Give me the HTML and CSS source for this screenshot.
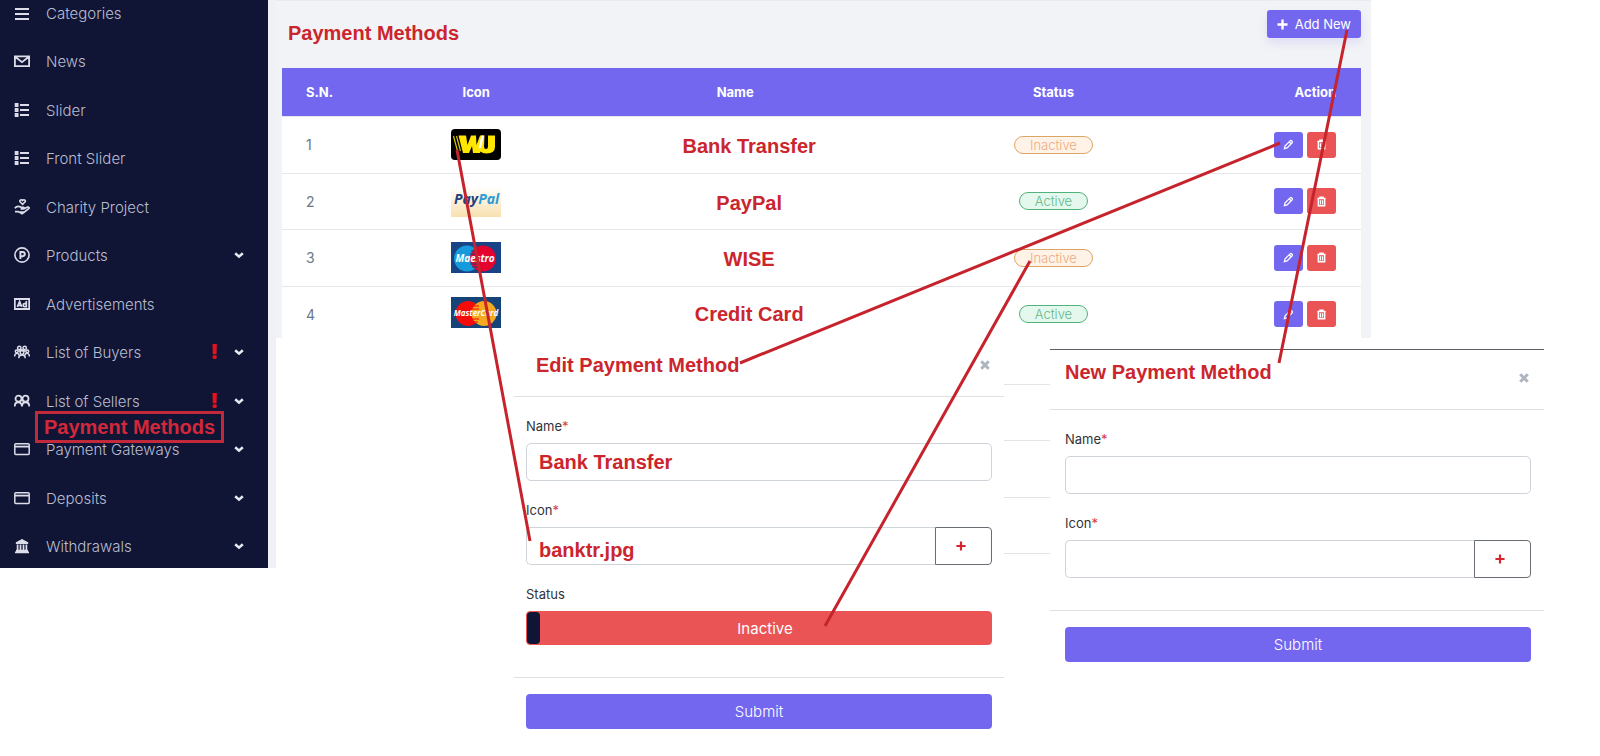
FILE: index.html
```html
<!DOCTYPE html>
<html lang="en">
<head>
<meta charset="utf-8">
<title>Payment Methods</title>
<link rel="stylesheet" href="styles.css">
</head>
<body>
<svg class="sprite" aria-hidden="true">
  <symbol id="i-menu" viewBox="0 0 16 16"><path d="M1 3h14M1 8h14M1 13h14" stroke-width="1.8"/></symbol>
  <symbol id="i-mail" viewBox="0 0 16 16"><path d="M.9 3.4h14.2v9.800H.9zM1.5 4L8 9.2 14.5 4" stroke-width="1.8"/></symbol>
  <symbol id="i-list" viewBox="0 0 16 16"><path d="M6 3h9M6 8h9M6 13h9" stroke-width="1.8"/><path d="M1.6 2h2v2.2h-2zM1.6 6.9h2v2.2h-2zM1.6 11.8h2V14h-2z" stroke-width="1.8"/></symbol>
  <symbol id="i-charity" viewBox="0 0 16 16"><path d="M8.6 5.4L5.9 2.6C5.3 1.2 7.4.1 8.6 1.6c1.200-1.500 3.300-.4 2.700 1z" stroke-width="1.500"/><path d="M.8 9.200C3 6.500 5 7 7 8.300h2.500c1 .4.700 1.700-.3 1.700H6.600M10 9.800l3.600-1.700c1.200-.4 2 .7 1.100 1.500L10.500 13H5.500L8 14.800l2.500-1.800M1 12.600h3l1.500.8" stroke-width="1.700"/></symbol>
  <symbol id="i-product" viewBox="0 0 16 16"><circle cx="8" cy="8" r="7.100" stroke-width="1.600"/><path d="M6.400 12V5h2.300a2 2 0 010 4.200H6.400" stroke-width="1.900"/></symbol>
  <symbol id="i-ad" viewBox="0 0 16 16"><path d="M.8 3h14.400v10H.8z" stroke-width="1.800"/><path d="M3.400 10.800L5.600 5.500l2.100 5.300M4.200 9.300h3M12.300 5v5.700H10.700a1.500 1.500 0 010-3h1.600" stroke-width="1.700"/></symbol>
  <symbol id="i-group" viewBox="0 0 16 16"><g stroke-width="1.500"><circle cx="5.300" cy="3.900" r="1.700"/><circle cx="10.700" cy="3.900" r="1.700"/><circle cx="2.700" cy="7.300" r="1.400"/><circle cx="13.300" cy="7.300" r="1.400"/><circle cx="8" cy="8.600" r="1.800"/><path d="M.6 12.500c0-4 4-4 4.400-1M15.400 12.500c0-4-4-4-4.400-1M4.800 14.200c0-4.400 6.400-4.400 6.400 0M4.500 7.500L8 5.700l3.500 1.800"/></g></symbol>
  <symbol id="i-users" viewBox="0 0 16 16"><g stroke-width="1.800"><circle cx="4.500" cy="5.700" r="3"/><circle cx="11.500" cy="5.700" r="3"/><path d="M.7 13.600c0-5.800 7.300-5.800 7.300 0 0-5.800 7.300-5.800 7.300 0"/></g></symbol>
  <symbol id="i-card" viewBox="0 0 16 16"><rect x=".8" y="2.800" width="14.400" height="10.600" rx="1" stroke-width="1.500"/><path d="M1 5.600h14" stroke-width="1.800"/></symbol>
  <symbol id="i-bank" viewBox="0 0 16 16"><path d="M2 5.200L8 2l6 3.200z" fill="currentColor"/><path d="M2 5.200L8 2l6 3.200zM3.600 6.500V12M6.500 6.500V12M9.500 6.500V12M12.400 6.500V12M2 12.600h12M1 14.400h14" stroke-width="1.700"/></symbol>
  <symbol id="i-down" viewBox="0 0 10 10"><path d="M1.200 3.200L5 6.600l3.800-3.400" stroke-width="2.600"/></symbol>
  <symbol id="i-pen" viewBox="0 0 12 12"><path d="M1.500 10.500l.8-3L7.800 2c1-1 3.200.9 2.200 2.100L4.500 9.700zM6.800 3.200l2 2" stroke-width="1.400"/></symbol>
  <symbol id="i-trash" viewBox="0 0 12 12"><path d="M1.500 2.700h9M4.300 2.500V1.200h3.400v1.300M2.500 3v7.700h7V3M4.800 4.500v4.800M7.200 4.500v4.800" stroke-width="1.500"/></symbol>
  <symbol id="i-plus" viewBox="0 0 12 12"><path d="M6 .5v11M.5 6h11" stroke-width="2.600"/></symbol>
  <symbol id="i-close" viewBox="0 0 12 12"><path d="M1.500 1.500l9 9M10.500 1.500l-9 9" stroke-width="3.600"/></symbol>
</svg>

<div class="page">
  <nav class="sidebar">
    <ul class="menu">
      <li><a href="#"><svg class="icon"><use href="#i-menu"/></svg>Categories</a></li>
      <li><a href="#"><svg class="icon"><use href="#i-mail"/></svg>News</a></li>
      <li><a href="#"><svg class="icon"><use href="#i-list"/></svg>Slider</a></li>
      <li><a href="#"><svg class="icon"><use href="#i-list"/></svg>Front Slider</a></li>
      <li><a href="#"><svg class="icon"><use href="#i-charity"/></svg>Charity Project</a></li>
      <li><a href="#"><svg class="icon"><use href="#i-product"/></svg>Products<svg class="arrow"><use href="#i-down"/></svg></a></li>
      <li><a href="#"><svg class="icon"><use href="#i-ad"/></svg>Advertisements</a></li>
      <li><a href="#"><svg class="icon"><use href="#i-group"/></svg>List of Buyers<b class="alert">!</b><svg class="arrow"><use href="#i-down"/></svg></a></li>
      <li><a href="#"><svg class="icon"><use href="#i-users"/></svg>List of Sellers<b class="alert">!</b><svg class="arrow"><use href="#i-down"/></svg></a></li>
      <li><a class="callout" href="#">Payment Methods</a><a href="#"><svg class="icon"><use href="#i-card"/></svg>Payment Gateways<svg class="arrow"><use href="#i-down"/></svg></a></li>
      <li><a href="#"><svg class="icon"><use href="#i-card"/></svg>Deposits<svg class="arrow"><use href="#i-down"/></svg></a></li>
      <li><a href="#"><svg class="icon"><use href="#i-bank"/></svg>Withdrawals<svg class="arrow"><use href="#i-down"/></svg></a></li>
    </ul>
  </nav>

  <main class="main">
    <div class="panel-row">
      <section class="panel">
        <header class="panel-head">
          <h1 class="note">Payment Methods</h1>
          <button class="add" type="button"><svg class="plus"><use href="#i-plus"/></svg>Add New</button>
        </header>
        <table class="methods">
          <colgroup><col class="c-sn"><col class="c-icon"><col class="c-name"><col class="c-status"><col></colgroup>
          <thead>
            <tr><th class="sn">S.N.</th><th>Icon</th><th>Name</th><th>Status</th><th class="action">Action</th></tr>
          </thead>
          <tbody>
            <tr>
              <td class="sn">1</td>
              <td class="logo"><svg viewBox="0 0 50 31" role="img" aria-label="Western Union"><rect width="50" height="31" rx="4" fill="#000"/><path d="M2.500 7l4 15M5.500 7l4 15" stroke="#d9c400" stroke-width="1.200" fill="none"/><path d="M7.500 6.500H15l1.500 9.500 3.500-9.500h5l.5 9.500 3.500-9.500H33.500l-.5 11q0 2.500 2 2.500t2-2.500V6.500h7v11q0 7-8.500 7-4 0-6-2l-.5 1.500H22l-1-7-3 7h-6z" fill="#ffe600"/><path d="M30.500 6.500H33l-3 12.500h-2.500z" fill="#fff"/></svg></td>
              <td class="name note">Bank Transfer</td>
              <td><span class="badge off">Inactive</span></td>
              <td class="action"><div class="tools"><button class="tool edit" type="button" aria-label="Edit"><svg><use href="#i-pen"/></svg></button><button class="tool del" type="button" aria-label="Delete"><svg><use href="#i-trash"/></svg></button></div></td>
            </tr>
            <tr>
              <td class="sn">2</td>
              <td class="logo"><svg viewBox="0 0 50 31" role="img" aria-label="PayPal"><defs><linearGradient id="cream" x2="0" y2="1"><stop offset="0" stop-color="#fff"/><stop offset="1" stop-color="#f8e0b0"/></linearGradient></defs><rect width="50" height="31" fill="url(#cream)"/><text class="mark paypal" x="3" y="18" fill="#1c4080">Pay<tspan fill="#2f9ad6">Pal</tspan></text></svg></td>
              <td class="name note">PayPal</td>
              <td><span class="badge on">Active</span></td>
              <td class="action"><div class="tools"><button class="tool edit" type="button" aria-label="Edit"><svg><use href="#i-pen"/></svg></button><button class="tool del" type="button" aria-label="Delete"><svg><use href="#i-trash"/></svg></button></div></td>
            </tr>
            <tr>
              <td class="sn">3</td>
              <td class="logo"><svg viewBox="0 0 50 31" role="img" aria-label="Maestro"><rect width="50" height="31" fill="#184384"/><circle cx="16" cy="16.500" r="13" fill="#159bdc"/><circle cx="32" cy="16.500" r="13" fill="#e4032e"/><path d="M20 9h7M19 12h8M19 22h8M21 25h6" stroke="#184384" stroke-width="1"/><text class="mark" x="24" y="20" text-anchor="middle" fill="#fff">Maestro</text></svg></td>
              <td class="name note">WISE</td>
              <td><span class="badge off">Inactive</span></td>
              <td class="action"><div class="tools"><button class="tool edit" type="button" aria-label="Edit"><svg><use href="#i-pen"/></svg></button><button class="tool del" type="button" aria-label="Delete"><svg><use href="#i-trash"/></svg></button></div></td>
            </tr>
            <tr>
              <td class="sn">4</td>
              <td class="logo"><svg viewBox="0 0 50 31" role="img" aria-label="MasterCard"><rect width="50" height="31" fill="#164478"/><circle cx="17" cy="16.500" r="12.500" fill="#f60b0b"/><circle cx="33" cy="16.500" r="12.500" fill="#f5a91f"/><path d="M22 9h6M21 12h7M21 22h7M22 25h5" stroke="#f60b0b" stroke-width="1"/><text class="mark small" x="25" y="19" text-anchor="middle" fill="#fff">MasterCard</text></svg></td>
              <td class="name note">Credit Card</td>
              <td><span class="badge on">Active</span></td>
              <td class="action"><div class="tools"><button class="tool edit" type="button" aria-label="Edit"><svg><use href="#i-pen"/></svg></button><button class="tool del" type="button" aria-label="Delete"><svg><use href="#i-trash"/></svg></button></div></td>
            </tr>
          </tbody>
        </table>
      </section>
    </div>

    <div class="dialogs">
      <form class="dialog dialog-edit">
        <header class="dialog-head">
          <h2 class="note">Edit Payment Method</h2>
          <button class="close" type="button" aria-label="Close"><svg><use href="#i-close"/></svg></button>
        </header>
        <div class="fields">
          <label for="edit-name">Name<span class="req">*</span></label>
          <input id="edit-name" class="box note" type="text" value="Bank Transfer">
          <label for="edit-icon">Icon<span class="req">*</span></label>
          <div class="group">
            <input id="edit-icon" class="box note" type="text" value="banktr.jpg">
            <button class="pick" type="button" aria-label="Choose icon"><svg><use href="#i-plus"/></svg></button>
          </div>
          <label for="edit-status">Status</label>
          <button id="edit-status" class="toggle" type="button">Inactive</button>
        </div>
        <footer class="dialog-foot"><button class="submit" type="submit">Submit</button></footer>
      </form>

      <div class="rules" aria-hidden="true"><i></i><i></i><i></i><i></i></div>

      <form class="dialog dialog-new">
        <header class="dialog-head">
          <h2 class="note">New Payment Method</h2>
          <button class="close" type="button" aria-label="Close"><svg><use href="#i-close"/></svg></button>
        </header>
        <div class="fields">
          <label for="new-name">Name<span class="req">*</span></label>
          <input id="new-name" class="box note" type="text">
          <label for="new-icon">Icon<span class="req">*</span></label>
          <div class="group">
            <input id="new-icon" class="box note" type="text">
            <button class="pick" type="button" aria-label="Choose icon"><svg><use href="#i-plus"/></svg></button>
          </div>
        </div>
        <footer class="dialog-foot"><button class="submit" type="submit">Submit</button></footer>
      </form>
    </div>
  </main>

  <svg class="links" viewBox="0 0 1600 756" preserveAspectRatio="none" aria-hidden="true">
    <path d="M457 150L530 541M740 363L1280 143M1030 261L825 626M1347 30L1279 363"/>
  </svg>
</div>
</body>
</html>
```
FILE: styles.css
```css
* { box-sizing: border-box; }

body {
  margin: 0;
  background: #fff;
  color: #34393f;
  font-family: Inter, "Open Sans", sans-serif;
  font-size: 14px;
}

svg { display: block; fill: none; stroke: currentColor; }
.sprite { position: absolute; width: 0; height: 0; }
button { font-family: inherit; cursor: pointer; }

.note {
  margin: 0;
  color: #cb252d;
  font-family: "Liberation Sans", Arial, sans-serif;
  font-size: 20px;
  font-weight: 700;
}

.page {
  position: relative;
  display: grid;
  grid-template-columns: 276px 1fr;
  align-items: start;
}

/* Sidebar */
.sidebar {
  background: #101536;
  border-right: 8px solid #eff1f6;
}
.menu {
  margin: 0;
  padding: 0;
  list-style: none;
}
.menu li { position: relative; height: 48px; }
.menu li:nth-child(even) { height: 49px; }
.menu li:first-child { height: 37px; }
.menu li:last-child { height: 46px; }
.menu a {
  display: flex;
  align-items: center;
  gap: 16px;
  padding: 0 24px 0 14px;
  height: 48px;
  color: #b9bccf;
  font-size: 15px;
  font-weight: 300;
  text-decoration: none;
}
.menu li:first-child a { height: 27px; }
.icon { width: 16px; height: 16px; color: #dcdde8; }
.arrow { width: 10px; height: 10px; margin-left: auto; color: #e8e8f0; }
.alert {
  margin-left: auto;
  color: #e8101c;
  font-size: 20px;
  font-weight: 900;
}
.alert + .arrow { margin-left: 0; }
.menu .callout {
  position: absolute;
  left: 35px;
  top: -14px;
  z-index: 1;
  height: 32px;
  padding: 0 6px;
  border: 3px solid #c22a3b;
  color: #d2283a;
  font-family: "Liberation Sans", Arial, sans-serif;
  font-size: 20px;
  font-weight: 700;
}

/* Listing */
.panel-row {
  display: grid;
  grid-template-columns: 1095fr 229fr;
}
.panel {
  padding: 0 10px 0 6px;
  border-top: 1px solid #e9ebf0;
  background: #f2f3f6;
}
.panel-head {
  display: flex;
  justify-content: space-between;
  align-items: start;
  height: 67px;
  padding: 9px 0 0 6px;
}
.panel-head h1 { line-height: 46px; }
.add {
  display: flex;
  align-items: center;
  gap: 7px;
  height: 28px;
  padding: 0 10px;
  border: 0;
  border-radius: 3px;
  background: #7367f0;
  color: #fff;
  font-size: 13px;
  box-shadow: 0 5px 10px rgba(115, 103, 240, .15);
}
.plus { width: 11px; height: 11px; }

.methods {
  width: 100%;
  border-collapse: collapse;
  table-layout: fixed;
  background: #fff;
}
.c-sn { width: 11%; }
.c-icon { width: 14%; }
.c-name { width: 34%; }
.c-status { width: 25%; }
.methods th {
  height: 48px;
  padding: 0;
  background: #7367f0;
  color: #fff;
  font-size: 13px;
  font-weight: 700;
}
.methods td {
  height: 57px;
  padding: 0;
  border-top: 1px solid #e6e7ea;
  text-align: center;
}
.methods tr:nth-child(even) td { height: 56px; }
.methods .sn {
  padding-left: 24px;
  text-align: left;
}
.methods td.sn { color: #6b7888; }
.methods .action {
  padding-right: 25px;
  text-align: right;
}
.logo svg {
  width: 50px;
  height: 31px;
  margin: 0 auto;
  stroke: none;
}
.mark {
  font-family: "Open Sans", sans-serif;
  font-size: 10px;
  font-style: italic;
  font-weight: 700;
}
.mark.paypal { font-size: 14px; }
.mark.small { font-size: 8px; }
.methods .name { padding: 4px 0 0 28px; }
.methods tr:last-child td { height: 52px; padding-top: 4px; }
.methods tr:last-child .logo { padding-top: 0; }

.badge {
  display: inline-block;
  padding: 0 15px;
  border: 1px solid;
  border-radius: 9px;
  font-size: 13px;
  font-weight: 300;
  line-height: 16px;
}
.badge.off { border-color: #dda468; background: #fff3e8; color: #eeaa80; }
.badge.on { border-color: #52b27c; background: #e5f8ee; color: #62b888; }

.tools {
  display: flex;
  justify-content: flex-end;
  gap: 4px;
}
.tool {
  display: grid;
  place-items: center;
  width: 29px;
  height: 26px;
  padding: 0;
  border: 0;
  border-radius: 3px;
  color: #fff;
}
.tool svg { width: 11px; height: 11px; }
.edit { background: #7367f0; }
.del { background: #ea5455; }

/* Dialogs */
.dialogs {
  display: grid;
  grid-template-columns: 238fr 490fr 46fr 494fr 56fr;
  align-items: start;
}
.dialog-edit { grid-column: 2; }
.dialog-head {
  display: flex;
  justify-content: space-between;
  align-items: center;
  height: 59px;
  border-bottom: 1px solid #dedfe1;
}
.dialog-edit .dialog-head { padding: 0 14px 4px 22px; }
.dialog-new {
  margin-top: 11px;
  border-top: 1px solid #5e5c64;
}
.dialog-new .dialog-head { height: 60px; padding: 0 15px 4px; }
.dialog-new h2 { padding-bottom: 10px; }
.close {
  padding: 0;
  border: 0;
  background: none;
  color: #adb5bf;
}
.close svg { width: 10px; height: 10px; }

.fields {
  display: flex;
  flex-direction: column;
  padding: 20px 12px 32px;
}
.dialog-new .fields, .dialog-new .dialog-foot { padding-left: 15px; padding-right: 13px; }
.fields label {
  margin-bottom: 8px;
  color: #30343a;
  font-size: 13px;
  line-height: 18px;
}
.box + label, .group + label { margin-top: 20px; }
.req { color: #d83a45; }
.box {
  width: 100%;
  height: 38px;
  padding: 0 12px;
  border: 1px solid #ced4da;
  border-radius: 5px;
  background: #fff;
}
.group { display: flex; }
.group .box {
  flex: 1;
  width: auto;
  min-width: 0;
  padding-top: 8px;
  border-right: 0;
  border-radius: 5px 0 0 5px;
}
.pick {
  display: grid;
  place-items: center;
  width: 57px;
  padding: 0 6px 0 0;
  border: 1px solid #686d73;
  border-radius: 0 4px 4px 0;
  background: #fff;
  color: #d8232c;
}
.pick svg { width: 10px; height: 10px; }
.toggle {
  position: relative;
  height: 34px;
  padding: 0 0 0 12px;
  border: 1px solid #ea5455;
  border-radius: 4px;
  background: #ea5455;
  color: #fff;
  font-size: 15px;
}
.toggle::before {
  content: "";
  position: absolute;
  left: 0;
  top: 0;
  width: 13px;
  height: 100%;
  border-radius: 4px;
  background: #101536;
}
.dialog-foot {
  padding: 16px 12px;
  border-top: 1px solid #dedfe1;
}
.submit {
  width: 100%;
  height: 35px;
  border: 0;
  border-radius: 4px;
  background: #7367f0;
  color: #fff;
  font-size: 15px;
  font-weight: 300;
}

.rules {
  display: grid;
  grid-template-rows: 47px 56px 57px 56px;
}
.rules i { border-bottom: 1px solid #e3e4e6; }

/* Connector lines over the page */
.links {
  position: absolute;
  left: 0;
  top: 0;
  width: 100%;
  height: 756px;
  pointer-events: none;
}
.links path {
  stroke: #c6232d;
  stroke-width: 3;
  vector-effect: non-scaling-stroke;
}
```
